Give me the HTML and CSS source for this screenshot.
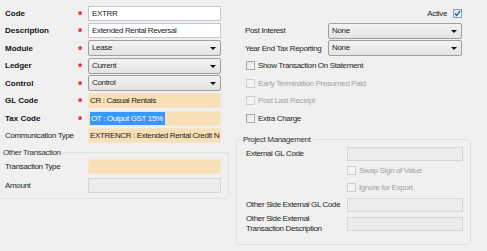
FILE: index.html
```html
<!DOCTYPE html>
<html lang="en">
<head>
  <meta charset="UTF-8">
  <title>Transaction Type</title>
  <link rel="stylesheet" href="styles.css">
</head>
<body>
  <div class="form">
    <!-- Left column -->
    <div class="col-left">
      <div class="rows">
        <div class="label bold">Code</div><div class="star">*</div><div class="field white">EXTRR</div>
        <div class="label bold">Description</div><div class="star">*</div><div class="field white">Extended Rental Reversal</div>
        <div class="label bold">Module</div><div class="star">*</div><div class="field select">Lease<span class="arrow"></span></div>
        <div class="label bold">Ledger</div><div class="star">*</div><div class="field select">Current<span class="arrow"></span></div>
        <div class="label bold">Control</div><div class="star">*</div><div class="field select">Control<span class="arrow"></span></div>
        <div class="label bold">GL Code</div><div class="star">*</div><div class="field tan">CR : Casual Rentals</div>
        <div class="label bold">Tax Code</div><div class="star">*</div><div class="field tan"><span class="selected">OT : Output GST 15%</span></div>
        <div class="label">Communication Type</div><div></div><div class="field tan">EXTRENCR : Extended Rental Credit No</div>
      </div>

      <fieldset class="group other-group">
        <legend>Other Transaction</legend>
        <div class="rows other-rows">
          <div class="label">Transaction Type</div><div></div><div class="field tan"></div>
          <div class="label">Amount</div><div></div><div class="field disabled"></div>
        </div>
      </fieldset>
    </div>

    <!-- Right column -->
    <div class="col-right">
      <div class="active-row">
        <span>Active</span>
        <span class="check checked">
          <svg width="7" height="7" viewBox="0 0 7 7"><path d="M1 3.5 L2.8 5.5 L6 0.8" fill="none" stroke="#2b4fa8" stroke-width="1.3"/></svg>
        </span>
      </div>
      <div class="opt-row">
        <div class="label">Post Interest</div>
        <div class="field select wide">None<span class="arrow"></span></div>
      </div>
      <div class="opt-row">
        <div class="label">Year End Tax Reporting</div>
        <div class="field select wide">None<span class="arrow"></span></div>
      </div>
      <div class="check-row"><span class="check"></span>Show Transaction On Statement</div>
      <div class="check-row dim"><span class="check"></span>Early Termination Presumed Paid</div>
      <div class="check-row dim"><span class="check"></span>Post Last Receipt</div>
      <div class="check-row"><span class="check"></span>Extra Charge</div>

      <fieldset class="group pm-group">
        <legend>Project Management</legend>
        <div class="pm-rows">
          <div class="label">External GL Code</div><div class="field disabled"></div>
          <div></div><div class="check-row dim"><span class="check"></span>Swap Sign of Value</div>
          <div></div><div class="check-row dim"><span class="check"></span>Ignore for Export</div>
          <div class="label">Other Side External GL Code</div><div class="field disabled"></div>
          <div class="label two">Other Side External<br>Transaction Description</div><div class="field disabled"></div>
        </div>
      </fieldset>
    </div>
  </div>
</body>
</html>
```

FILE: styles.css
```css
* {
  margin: 0;
  padding: 0;
  box-sizing: border-box;
}

body {
  font-family: "Liberation Sans", Arial, sans-serif;
  font-size: 8px;
  letter-spacing: -0.35px;
  color: #1e1e1e;
  background-color: #f0f0f0;
  width: 487px;
  height: 251px;
  overflow: hidden;
}

.form {
  display: flex;
  gap: 7px;
}

/* Left column */
.col-left {
  width: 229px;
}

.rows {
  display: grid;
  grid-template-columns: 73px 10px 133px;
  grid-auto-rows: 17.5px;
  align-items: center;
  padding: 4.5px 0 0 5px;
}

.label {
  white-space: nowrap;
}

.bold {
  font-weight: bold;
  letter-spacing: 0;
  color: #111;
}

.star {
  color: #e8141b;
  font-weight: bold;
  font-size: 11px;
  line-height: 8px;
  padding-top: 3px;
}

.field {
  height: 15px;
  line-height: 13px;
  padding: 0 3px;
  border: 1px solid #abadb3;
  white-space: nowrap;
  overflow: hidden;
  text-overflow: clip;
  position: relative;
}

.white {
  background: #fff;
  border-color: #c3c6cc;
}

.tan {
  background: #f9dfb5;
  border-color: #f3e6d0;
  padding-left: 1px;
}

.disabled {
  background: #ececec;
  border-color: #d6d6d6;
}

.select {
  height: 16px;
  line-height: 14px;
  border-color: #9e9e9e;
  border-radius: 2px;
  background: linear-gradient(#f3f3f3, #e3e3e3);
}

.arrow {
  position: absolute;
  right: 4px;
  top: 6px;
  width: 0;
  height: 0;
  border-left: 3px solid transparent;
  border-right: 3px solid transparent;
  border-top: 3px solid #111;
}

.selected {
  background: #3399ff;
  color: #fff;
  padding: 0 2px 0 1px;
  display: inline-block;
  line-height: 13px;
}

/* Group boxes */
.group {
  border: 1px solid #dce3e8;
  border-radius: 3px;
  min-width: 0;
}

.group legend {
  padding: 0 2px;
  color: #333;
}

.other-group {
  margin-top: 3px;
  border-left: none;
  border-top-left-radius: 0;
  border-bottom-left-radius: 0;
  height: 51px;
}

.other-group legend {
  margin-left: 1px;
}

.other-rows {
  padding: 1px 0 0 5px;
  grid-template-columns: 73px 10px 133px;
  grid-template-rows: 18px 20px;
}

/* Right column */
.col-right {
  width: 235px;
  padding-top: 4.5px;
}

.active-row {
  height: 17.5px;
  display: flex;
  align-items: center;
  justify-content: flex-end;
  gap: 6px;
  padding-right: 9px;
}

.opt-row {
  height: 17.5px;
  display: flex;
  align-items: center;
  padding-left: 9px;
}

.opt-row .label {
  width: 83px;
}

.wide {
  width: 134px;
}

.check-row {
  height: 17.5px;
  display: flex;
  align-items: center;
  gap: 3px;
  padding-left: 10px;
  white-space: nowrap;
}

.dim {
  color: #a3a3a3;
}

.check {
  width: 9px;
  height: 9px;
  border: 1px solid #a7a7a7;
  background: linear-gradient(135deg, #e4e4e4, #fbfbfb);
  display: inline-flex;
  align-items: center;
  justify-content: center;
}

.dim .check {
  border-color: #cfcfcf;
  background: #f4f4f4;
}

.checked {
  border-color: #8a9bb8;
  background: linear-gradient(135deg, #d9e4f5, #f3f7fc);
}

.pm-group {
  margin-top: 8px;
  height: 110px;
}

.pm-group legend {
  margin-left: 4px;
}

.pm-rows {
  display: grid;
  grid-template-columns: 101px 116px;
  grid-template-rows: 17px 17px 17px 17px 22px;
  align-items: center;
  padding: 1px 0 0 9px;
}

.pm-rows .field {
  height: 14px;
}

.pm-rows .check-row {
  padding-left: 0;
}

.two {
  line-height: 10px;
}
```
